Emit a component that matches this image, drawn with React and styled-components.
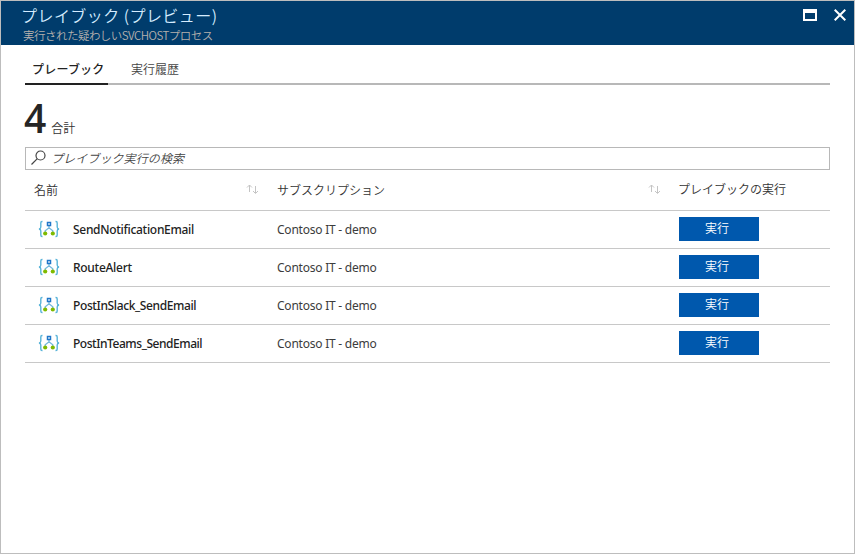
import React from "react";
import styled, { createGlobalStyle } from "styled-components";

const GlobalStyle = createGlobalStyle`
  * { box-sizing: border-box; }
  body { margin: 0; background: #fff; }
  button, input { font: inherit; }
`;

const Blade = styled.main`
  display: flex;
  flex-direction: column;
  width: 855px;
  height: 554px;
  border: 1px solid #bdbdbd;
  background: #fff;
  color: #333;
  font-family: "Noto Sans", "Noto Sans CJK JP", sans-serif;
  font-size: 12px;
  font-weight: 350;
  overflow: hidden;
`;

const Header = styled.header`
  display: flex;
  justify-content: space-between;
  flex: none;
  height: 44px;
  padding: 0 8px 0 20px;
  background: #003c6c;
`;

const Title = styled.h1`
  margin: 2px 0 0;
  font-size: 16px;
  line-height: 24px;
  font-weight: 350;
  font-family: "Noto Sans CJK JP", sans-serif;
  letter-spacing: 0.45px;
  color: #d5ecff;
  white-space: nowrap;
`;

const Subtitle = styled.p`
  margin: 0 0 0 2px;
  font-family: "Noto Sans CJK JP", sans-serif;
  font-size: 11.5px;
  line-height: 17px;
  font-weight: 350;
  letter-spacing: -0.52px;
  color: #b5b0ad;
  white-space: nowrap;
`;

const WindowControls = styled.div`
  display: flex;
  gap: 17px;
  padding-top: 8px;
  svg { display: block; }
`;

const Content = styled.div`
  display: flex;
  flex-direction: column;
  padding: 0 24px;
`;

const Tabs = styled.nav`
  display: flex;
  height: 40px;
  border-bottom: 2px solid #b8b8b8;
`;

const Tab = styled.button`
  height: 40px;
  width: ${(p) => p.$width}px;
  padding: 11px 0 0 7px;
  margin-right: 16px;
  border: 0;
  border-bottom: 2px solid ${(p) => (p.$active ? "#222" : "transparent")};
  background: none;
  color: ${(p) => (p.$active ? "#222" : "#444")};
  font-weight: ${(p) => (p.$active ? 500 : 350)};
  letter-spacing: ${(p) => (p.$active ? 0.2 : 0)}px;
  line-height: 18px;
  text-align: left;
  white-space: nowrap;
`;

const Summary = styled.div`
  display: flex;
  align-items: flex-start;
  gap: 5px;
  height: 62px;
  padding-top: 8px;
`;

const Count = styled.strong`
  margin-left: -1px;
  font-family: "Open Sans", sans-serif;
  font-size: 39px;
  line-height: 50px;
  font-weight: 600;
  color: #252525;
`;

const CountLabel = styled.span`
  padding-top: 27px;
  line-height: 18px;
`;

const SearchBox = styled.label`
  display: flex;
  align-items: center;
  height: 23px;
  border: 1px solid #b8b8b8;
  padding-left: 5px;
  gap: 5px;
  svg { flex: none; margin-bottom: 2px; }
`;

const SearchInput = styled.input`
  flex: 1;
  min-width: 0;
  padding: 0;
  border: 0;
  outline: 0;
  background: none;
  font-style: italic;
  letter-spacing: 0.1px;
  &::placeholder { color: #444; opacity: 1; }
`;

const Row = styled.div`
  display: grid;
  grid-template-columns: 252px 402px 151px;
  align-items: center;
  height: ${(p) => (p.$head ? 41 : 38)}px;
  border-bottom: 1px solid #c8c8c8;
`;

const HeadCell = styled.div`
  display: flex;
  justify-content: space-between;
  align-items: center;
  height: 38px;
  padding: ${(p) => p.$pad};
  line-height: 18px;
  white-space: nowrap;
  svg { margin-bottom: 4px; }
`;

const ActionHeading = styled(HeadCell)`
  margin-left: -1px;
`;

const NameCell = styled.div`
  display: flex;
  align-items: center;
  gap: 13px;
  padding-left: 13px;
  font-weight: 500;
  color: #222;
  svg { margin-bottom: 2px; }
`;

const Name = styled.span`
  letter-spacing: ${(p) => p.$spacing}px;
`;

const Subscription = styled.div`
  font-weight: 400;
  letter-spacing: -0.23px;
  color: #3c3c3c;
`;

const RunButton = styled.button`
  width: 80px;
  height: 24px;
  margin-bottom: 2px;
  padding: 0 4px 0 0;
  border: 0;
  background: #0058ad;
  color: #fff;
  line-height: 18px;
`;

const SortIcon = () => (
  <svg width="12" height="11" viewBox="0 0 12 11" fill="none" stroke="#c4c4c4">
    <path d="M3.500 8V1M1 3.500L3.500 1L6 3.500M9.500 2v7M7 7L9.500 9.500L12 7" />
  </svg>
);

const LogicAppIcon = () => (
  <svg width="22" height="18" viewBox="0 0 22 18" fill="none">
    <path d="M4.500 1.500H4Q2.800 1.500 2.800 3V7Q2.800 8.700 1 9Q2.800 9.300 2.800 11V15Q2.800 16.500 4 16.500H4.500M17.500 1.500H18Q19.200 1.500 19.200 3V7Q19.200 8.700 21 9Q19.200 9.300 19.200 11V15Q19.200 16.500 18 16.500H17.500" stroke="#59b4d9" strokeWidth="1.400" />
    <path d="M11 5v3M7.200 13v-2.200L11 7.800L14.800 10.800V13" stroke="#72b8dc" strokeWidth="1.300" />
    <rect x="9.500" y="2.500" width="3" height="3" fill="#fff" stroke="#2077c9" strokeWidth="1.500" />
    <circle cx="7.200" cy="13.500" r="2.100" fill="#7fba00" />
    <circle cx="14.800" cy="13.500" r="2.100" fill="#7fba00" />
  </svg>
);

const playbooks = [
  { name: "SendNotificationEmail", spacing: -0.3 },
  { name: "RouteAlert", spacing: -0.28 },
  { name: "PostInSlack_SendEmail", spacing: -0.38 },
  { name: "PostInTeams_SendEmail", spacing: -0.46 },
];

export default function App() {
  return (
    <>
      <GlobalStyle />
      <Blade>
        <Header>
          <div>
            <Title>プレイブック (プレビュー)</Title>
            <Subtitle>実行された疑わしいSVCHOSTプロセス</Subtitle>
          </div>
          <WindowControls>
            <svg width="14" height="12" viewBox="0 0 14 12">
              <path fill="#fff" fillRule="evenodd" d="M0 0h14v12H0zM2 4v6h10V4z" />
            </svg>
            <svg width="12" height="12" viewBox="0 0 12 12" stroke="#fff" strokeWidth="2">
              <path d="M.7.7l10.600 10.600M11.300.7L.7 11.300" />
            </svg>
          </WindowControls>
        </Header>
        <Content>
          <Tabs>
            <Tab $active $width={83}>プレーブック</Tab>
            <Tab $width={66}>実行履歴</Tab>
          </Tabs>
          <Summary>
            <Count>4</Count>
            <CountLabel>合計</CountLabel>
          </Summary>
          <SearchBox>
            <svg width="15" height="15" viewBox="0 0 15 15" fill="none" stroke="#444" strokeWidth="1.200">
              <circle cx="9.500" cy="5.500" r="4.500" />
              <path d="M6.300 8.700L.5 14.500" />
            </svg>
            <SearchInput placeholder="プレイブック実行の検索" />
          </SearchBox>
          <Row $head>
            <HeadCell $pad="2px 19px 0 9px">名前<SortIcon /></HeadCell>
            <HeadCell $pad="2px 19px 0 0">サブスクリプション<SortIcon /></HeadCell>
            <ActionHeading $pad="0">プレイブックの実行</ActionHeading>
          </Row>
          {playbooks.map((p) => (
            <Row key={p.name}>
              <NameCell>
                <LogicAppIcon />
                <Name $spacing={p.spacing}>{p.name}</Name>
              </NameCell>
              <Subscription>Contoso IT - demo</Subscription>
              <RunButton>実行</RunButton>
            </Row>
          ))}
        </Content>
      </Blade>
    </>
  );
}
